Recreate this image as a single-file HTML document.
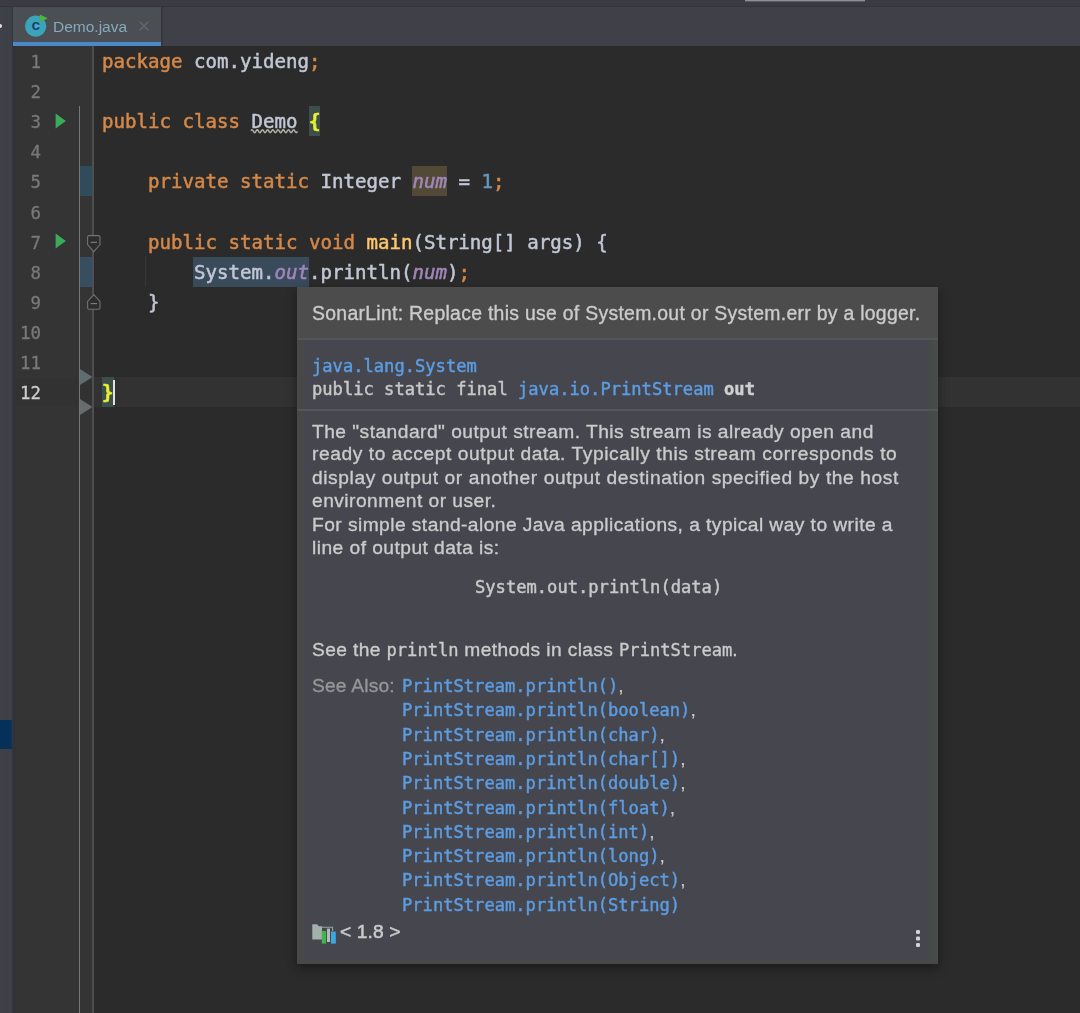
<!DOCTYPE html>
<html lang="en"><head><meta charset="utf-8"><title>Demo.java</title>
<style>
*{box-sizing:border-box;margin:0;padding:0}
html,body{width:1080px;height:1013px;overflow:hidden;background:#2b2b2b}
body{position:relative;font-family:"Liberation Sans",sans-serif;color:#a9b7c6}
.abs{position:absolute}
#topstrip{left:0;top:0;width:1080px;height:7px;background:#3b3c43}
#topline{left:0;top:6px;width:1080px;height:1px;background:#34353b}
#handle{left:745px;top:0;width:120px;height:2px;background:linear-gradient(180deg,#8f9097 0,#8f9097 1px,#5a5b62 1px,#5a5b62 2px)}
#tabbar{left:0;top:7px;width:1080px;height:39px;background:#3f4048}
#leftstrip{left:0;top:7px;width:16px;height:1006px;background:linear-gradient(90deg,#3f4048 0,#3d4048 11.5px,#31353c 12.5px,#2f3239 14.5px,#343434 16px)}
#tab{left:13px;top:7px;width:148px;height:39px;background:#4b4e53}
#tabline{left:13px;top:42px;width:148px;height:4px;background:#4a88c7}
#tabname{left:53px;top:16px;font-size:15.5px;line-height:22px;color:#84aabb;white-space:pre}
#tabx{left:137px;top:19px;width:14px;height:14px}
#gutter{left:16px;top:46px;width:77px;height:967px;background:#343434}
#gline{left:92px;top:46px;width:2px;height:967px;background:#4d4e4f}
#fline{left:79px;top:106px;width:1px;height:907px;background:#74777a}
#caretrow{left:16px;top:377.4px;width:1067px;height:30.1px;background:#323232}
.vcs{left:80px;width:12px;height:30.1px;background:#33506a}
.ln{left:13px;margin-top:1px;-webkit-text-stroke:0.3px currentColor;width:28px;text-align:right;font-family:"DejaVu Sans Mono","Liberation Mono",monospace;font-size:17.4px;line-height:30px;height:30px;color:#77797b;white-space:pre}
.ln.cur{color:#cfcfcf}
.cl{left:102px;margin-top:1px;font-family:"DejaVu Sans Mono","Liberation Mono",monospace;font-size:19.1px;line-height:30px;height:30px;white-space:pre;color:#c2c7d5;letter-spacing:0px;-webkit-text-stroke:0.5px currentColor}
.k{color:#d58849}.n{color:#6897bb}.m{color:#ffc66d}
.f{color:#a286bb;font-style:italic}
.wr{background:#524a36;padding:3.9px 0 3px}
.hov{background:#394a5b;padding:3.9px 0 3px;margin-left:-1px;padding-left:1px}
.br{color:#eaef30;background:#3d4f4c;padding:3.9px 0 3px;font-weight:bold}
.warn{}
#caret{left:113px;top:380px;width:2px;height:25px;background:#e2e2e2}
#pop{left:297px;top:287px;width:641px;height:677px;background:#484849;box-shadow:0 4px 10px rgba(0,0,0,.4)}
#popin{left:304px;top:340px;width:624px;height:621px;background:#46464e}
#popsb{left:928px;top:340px;width:10px;height:621px;background:linear-gradient(90deg,#434a47,#4a4c4b)}
#pophead{left:297px;top:287px;width:641px;height:51px;background:#4c4c4d}
.sep{left:297px;width:641px;height:2px;background:#54555a}
.pt{left:311.5px;white-space:pre;font-size:19.2px;line-height:23px;height:23px;color:#cbcbcb;-webkit-text-stroke:0.35px currentColor}
.pm{font-family:"DejaVu Sans Mono","Liberation Mono",monospace;font-size:17.12px;letter-spacing:0}
.a{color:#5c9de2}
.pc{left:311.5px;margin-top:1px;white-space:pre;font-family:"DejaVu Sans Mono","Liberation Mono",monospace;font-size:17.12px;line-height:23px;height:23px;color:#c8c8c8;-webkit-text-stroke:0.45px currentColor}
.dim{color:#969696}
.pt,.pc,.cl,.ln,#tabname{will-change:transform}
</style></head><body>
<div class="abs" id="topstrip"></div>
<div class="abs" id="tabbar"></div>
<div class="abs" id="topline"></div>
<div class="abs" id="handle"></div>
<div class="abs" id="leftstrip"></div>
<div class="abs" id="tab"></div>
<div class="abs" id="tabline"></div>
<div class="abs" style="left:161px;top:7px;width:2px;height:39px;background:linear-gradient(90deg,#34353b,#3b3c43)"></div>
<svg class="abs" style="left:22px;top:12px" width="28" height="28" viewBox="0 0 28 28">
 <circle cx="13.7" cy="14.2" r="10.6" fill="#3ba3ba"/>
 <circle cx="13.7" cy="14.2" r="4" fill="#4fa6d4"/>
 <text x="13.7" y="18.3" text-anchor="middle" font-family="Liberation Sans, sans-serif" font-weight="bold" font-size="15.5" fill="#0f4a63">c</text>
 <path d="M17.8 2.4 L25.8 6.3 L17.8 10.4 Z" fill="#4db23f"/>
</svg>
<svg class="abs" style="left:0;top:22px" width="4" height="8" viewBox="0 0 4 8"><circle cx="0" cy="4" r="2" fill="#e4e4e4"/></svg>
<div class="abs" id="tabname">Demo.java</div>
<svg class="abs" id="tabx" viewBox="0 0 14 14"><path d="M2.5 2.5 L11.5 11.5 M11.5 2.5 L2.5 11.5" stroke="#64666a" stroke-width="1.3" fill="none"/></svg>
<div class="abs" id="gutter"></div>
<div class="abs" id="caretrow"></div>
<div class="abs" id="gline"></div>
<div class="abs" id="fline"></div>

<div class="abs vcs" style="top:166.4px;background:#304b59"></div>
<div class="abs vcs" style="top:256.7px;background:#374d62"></div>
<div class="abs ln" style="top:46.0px">1</div>
<div class="abs ln" style="top:76.1px">2</div>
<div class="abs ln" style="top:106.2px">3</div>
<div class="abs ln" style="top:136.3px">4</div>
<div class="abs ln" style="top:166.4px">5</div>
<div class="abs ln" style="top:196.5px">6</div>
<div class="abs ln" style="top:226.6px">7</div>
<div class="abs ln" style="top:256.7px">8</div>
<div class="abs ln" style="top:286.8px">9</div>
<div class="abs ln" style="top:316.9px">10</div>
<div class="abs ln" style="top:347.0px">11</div>
<div class="abs ln cur" style="top:377.1px">12</div>
<div class="abs cl" style="top:46.0px"><span class="k">package</span> com.yideng<span class="k">;</span></div>
<div class="abs cl" style="top:106.2px"><span class="k">public class</span> <span class="warn">Demo</span> <span class="br">{</span></div>
<div class="abs cl" style="top:166.4px">    <span class="k">private static</span> Integer <span class="f wr">num</span> = <span class="n">1</span><span class="k">;</span></div>
<div class="abs cl" style="top:226.6px">    <span class="k">public static void</span> <span class="m">main</span>(String[] args) {</div>
<div class="abs cl" style="top:256.7px">        <span class="hov">System.<span class="f">out</span></span>.println(<span class="f">num</span>)<span class="k">;</span></div>
<div class="abs cl" style="top:286.8px">    }</div>
<div class="abs cl" style="top:377.1px"><span class="br">}</span></div>
<svg class="abs" style="left:54px;top:112.8px" width="13" height="16" viewBox="0 0 13 16"><path d="M1.6 0.4 L11.9 8 L1.6 15.6 Z" fill="#3bab5a"/></svg>
<svg class="abs" style="left:54px;top:233.2px" width="13" height="16" viewBox="0 0 13 16"><path d="M1.6 0.4 L11.9 8 L1.6 15.6 Z" fill="#3bab5a"/></svg>
<svg class="abs" style="left:86px;top:234px" width="16" height="20" viewBox="0 0 16 20"><path d="M1.6 3 Q1.6 1.6 3 1.6 H12.6 Q14 1.6 14 3 V10.5 L7.8 17.6 L1.6 10.5 Z" fill="#2d2d2d" stroke="#707375" stroke-width="1.1"/><path d="M4.6 8.3 H11" stroke="#808385" stroke-width="1.1"/></svg>
<svg class="abs" style="left:86px;top:292px" width="16" height="20" viewBox="0 0 16 20"><path d="M1.6 15.8 Q1.6 17.2 3 17.2 H12.6 Q14 17.2 14 15.8 V9.5 L7.8 2.6 L1.6 9.5 Z" fill="#2d2d2d" stroke="#707375" stroke-width="1.1"/><path d="M4.6 11.6 H11" stroke="#808385" stroke-width="1.1"/></svg>
<svg class="abs" style="left:80px;top:369px" width="13" height="16" viewBox="0 0 13 16"><path d="M0 0 L12.5 8 L0 16 Z" fill="#5f6d6e"/></svg>
<svg class="abs" style="left:80px;top:399px" width="13" height="16" viewBox="0 0 13 16"><path d="M0 0 L12.5 8 L0 16 Z" fill="#696c6d"/></svg>
<svg class="abs" style="left:250px;top:127px" width="50" height="8" viewBox="0 0 50 8"><path d="M1.0 3.79 L1.5 3.10 L2.0 2.80 L2.5 3.00 L3.0 3.62 L3.5 4.45 L4.0 5.19 L4.5 5.58 L5.0 5.48 L5.5 4.93 L6.0 4.12 L6.5 3.34 L7.0 2.86 L7.5 2.86 L8.0 3.33 L8.5 4.11 L9.0 4.92 L9.5 5.48 L10.0 5.58 L10.5 5.19 L11.0 4.46 L11.5 3.63 L12.0 3.00 L12.5 2.80 L13.0 3.10 L13.5 3.78 L14.0 4.61 L14.5 5.30 L15.0 5.60 L15.5 5.40 L16.0 4.78 L16.5 3.95 L17.0 3.21 L17.5 2.82 L18.0 2.92 L18.5 3.47 L19.0 4.28 L19.5 5.06 L20.0 5.54 L20.5 5.54 L21.0 5.07 L21.5 4.29 L22.0 3.48 L22.5 2.92 L23.0 2.82 L23.5 3.21 L24.0 3.94 L24.5 4.77 L25.0 5.40 L25.5 5.60 L26.0 5.30 L26.5 4.62 L27.0 3.79 L27.5 3.10 L28.0 2.80 L28.5 3.00 L29.0 3.62 L29.5 4.45 L30.0 5.19 L30.5 5.58 L31.0 5.48 L31.5 4.93 L32.0 4.12 L32.5 3.34 L33.0 2.86 L33.5 2.86 L34.0 3.33 L34.5 4.11 L35.0 4.92 L35.5 5.48 L36.0 5.58 L36.5 5.19 L37.0 4.46 L37.5 3.63 L38.0 3.00 L38.5 2.80 L39.0 3.10 L39.5 3.78 L40.0 4.61 L40.5 5.30 L41.0 5.60 L41.5 5.40 L42.0 4.78 L42.5 3.95 L43.0 3.21 L43.5 2.82 L44.0 2.92 L44.5 3.47 L45.0 4.28 L45.5 5.06 L46.0 5.54 L46.5 5.54 L47.0 5.07 L47.5 4.29" fill="none" stroke="#b0b0a8" stroke-width="1.5"/></svg>
<div class="abs" id="caret"></div>
<div class="abs" style="left:145px;top:256px;width:1px;height:30px;background:#373737"></div>
<div class="abs" id="pop"></div>
<div class="abs" id="popin"></div>
<div class="abs" id="popsb"></div>
<div class="abs" id="pophead"></div>
<div class="abs sep" style="top:338px"></div>
<div class="abs sep" style="top:408.5px"></div>
<div class="abs pt" style="top:302px;font-size:19.4px;letter-spacing:0.294px">SonarLint: Replace this use of System.out or System.err by a logger.</div>
<div class="abs pc" style="top:354px"><span class="a">java.lang.System</span></div>
<div class="abs pc" style="top:377px">public static final <span class="a">java.io.PrintStream</span> <b style="color:#d0d0d0">out</b></div>

<div class="abs pt" style="top:420px;letter-spacing:0.477px">The "standard" output stream. This stream is already open and</div>
<div class="abs pt" style="top:442px;letter-spacing:0.576px">ready to accept output data. Typically this stream corresponds to</div>
<div class="abs pt" style="top:466px;letter-spacing:0.585px">display output or another output destination specified by the host</div>
<div class="abs pt" style="top:489px;letter-spacing:0.467px">environment or user.</div>
<div class="abs pt" style="top:513px;letter-spacing:0.448px">For simple stand-alone Java applications, a typical way to write a</div>
<div class="abs pt" style="top:536px;letter-spacing:0.460px">line of output data is:</div>
<div class="abs pc" style="left:475px;top:575px">System.out.println(data)</div>
<div class="abs pt" style="top:638px;letter-spacing:0.38px">See the <span class="pm">println</span> methods in class <span class="pm">PrintStream</span>.</div>
<div class="abs pt dim" style="top:674px;letter-spacing:0.2px">See Also:</div>
<div class="abs pc" style="left:402px;top:674.0px"><span class="a">PrintStream.println()</span><span style="font-family:'Liberation Sans',sans-serif;font-size:19.2px;line-height:0;color:#c9c9c9;-webkit-text-stroke:0.2px">,</span></div>
<div class="abs pc" style="left:402px;top:698.3px"><span class="a">PrintStream.println(boolean)</span><span style="font-family:'Liberation Sans',sans-serif;font-size:19.2px;line-height:0;color:#c9c9c9;-webkit-text-stroke:0.2px">,</span></div>
<div class="abs pc" style="left:402px;top:722.6px"><span class="a">PrintStream.println(char)</span><span style="font-family:'Liberation Sans',sans-serif;font-size:19.2px;line-height:0;color:#c9c9c9;-webkit-text-stroke:0.2px">,</span></div>
<div class="abs pc" style="left:402px;top:746.9px"><span class="a">PrintStream.println(char[])</span><span style="font-family:'Liberation Sans',sans-serif;font-size:19.2px;line-height:0;color:#c9c9c9;-webkit-text-stroke:0.2px">,</span></div>
<div class="abs pc" style="left:402px;top:771.2px"><span class="a">PrintStream.println(double)</span><span style="font-family:'Liberation Sans',sans-serif;font-size:19.2px;line-height:0;color:#c9c9c9;-webkit-text-stroke:0.2px">,</span></div>
<div class="abs pc" style="left:402px;top:795.5px"><span class="a">PrintStream.println(float)</span><span style="font-family:'Liberation Sans',sans-serif;font-size:19.2px;line-height:0;color:#c9c9c9;-webkit-text-stroke:0.2px">,</span></div>
<div class="abs pc" style="left:402px;top:819.8px"><span class="a">PrintStream.println(int)</span><span style="font-family:'Liberation Sans',sans-serif;font-size:19.2px;line-height:0;color:#c9c9c9;-webkit-text-stroke:0.2px">,</span></div>
<div class="abs pc" style="left:402px;top:844.1px"><span class="a">PrintStream.println(long)</span><span style="font-family:'Liberation Sans',sans-serif;font-size:19.2px;line-height:0;color:#c9c9c9;-webkit-text-stroke:0.2px">,</span></div>
<div class="abs pc" style="left:402px;top:868.4px"><span class="a">PrintStream.println(Object)</span><span style="font-family:'Liberation Sans',sans-serif;font-size:19.2px;line-height:0;color:#c9c9c9;-webkit-text-stroke:0.2px">,</span></div>
<div class="abs pc" style="left:402px;top:892.7px"><span class="a">PrintStream.println(String)</span></div>
<svg class="abs" style="left:312px;top:923px" width="25" height="22" viewBox="0 0 25 22"><path d="M0.3 1.2 H5.2 L6.8 3.2 H10 V16.6 H0.3 Z" fill="#a2b1ac"/><path d="M10 4.2 H20.6 V8" fill="none" stroke="#98a4a1" stroke-width="1.1"/><rect x="9.8" y="8" width="4.3" height="12.6" fill="#41b44b"/><rect x="15" y="5.6" width="3" height="13.4" fill="#b4bbb9"/><rect x="19" y="8.6" width="4.8" height="12" fill="#3ea8dc"/></svg>
<div class="abs pt" style="left:340px;top:920px;letter-spacing:0.12px;-webkit-text-stroke:0.5px currentColor">&lt; 1.8 &gt;</div>
<svg class="abs" style="left:914px;top:929px" width="8" height="20" viewBox="0 0 8 20"><rect x="2" y="1" width="4" height="4" rx="1.2" fill="#d2d2d6"/><rect x="2" y="7.5" width="4" height="4" rx="1.2" fill="#d2d2d6"/><rect x="2" y="14" width="4" height="4" rx="1.2" fill="#d2d2d6"/></svg>
<div class="abs" style="left:0;top:720px;width:12px;height:29px;background:linear-gradient(90deg,#04305a 0,#04305a 8.5px,#0e3358 12px)"></div>
</body></html>
